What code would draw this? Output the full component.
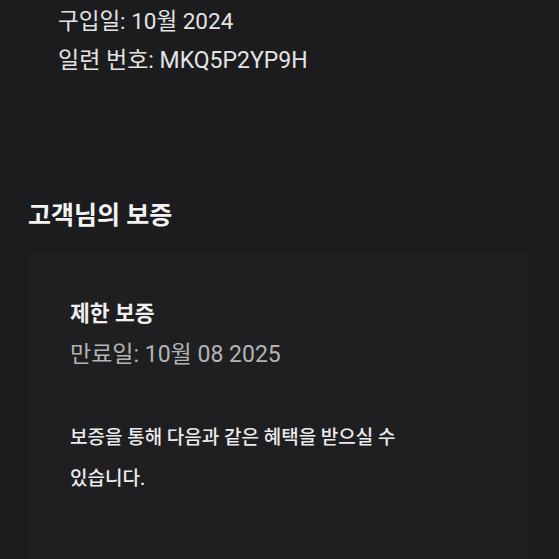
import React from 'react';

const font = { fontFamily: 'Roboto, "Noto Sans CJK KR", sans-serif' };

const App: React.FC = () => {
    return (
        <div className="h-[559px] w-[559px] bg-[#1c1c1e] overflow-hidden" style={font}>
            <div className="pl-[58px] pt-[1px] text-[22.5px] text-[#e4e4e4] leading-[40px]">
                <p>구입일: 10월 2024</p>
                <p className="text-[23px]">일련 번호: MKQ5P2YP9H</p>
            </div>
            <h2 className="mt-[120px] pl-[28px] text-[25px] font-bold text-[#f3f3f3] leading-[30px]">고객님의 보증</h2>
            <div className="mt-[22px] ml-[29px] w-[499px] h-[306px] bg-[#1f1f21] pl-[41px] pt-[46px]">
                <h3 className="text-[21.5px] font-bold text-[#f0f0f0] leading-[30px]">제한 보증</h3>
                <p className="mt-[11px] text-[23px] text-[#b4b4b4] leading-[30px]">만료일: 10월 08 2025</p>
                <p className="mt-[47px] w-[360px] break-keep text-[19px] font-medium text-[#ececec] leading-[41px]">
                    보증을 통해 다음과 같은 혜택을 받으실 수 있습니다.
                </p>
            </div>
        </div>
    );
};

export default App;
